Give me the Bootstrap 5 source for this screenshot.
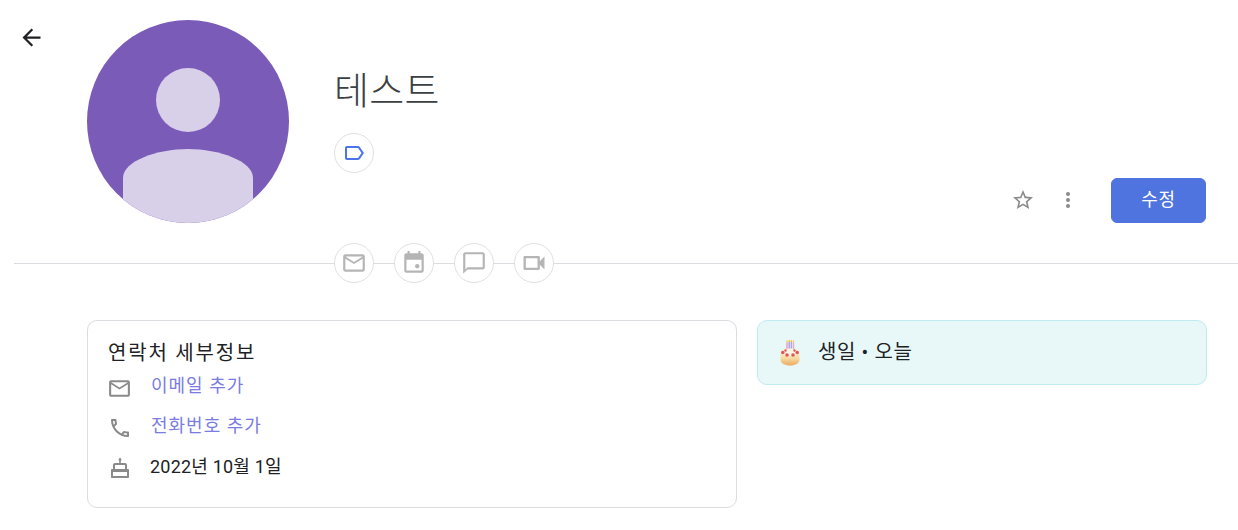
<!DOCTYPE html>
<html lang="ko">
<head>
    <meta charset="UTF-8">
    <meta name="viewport" content="width=device-width, initial-scale=1.0">
    <title>테스트</title>
    <link href="https://cdn.jsdelivr.net/npm/bootstrap@5.3.0/dist/css/bootstrap.min.css" rel="stylesheet">
    <style>
        body {
            background-color: #fff;
            color: #202124;
            font-family: Roboto, "Noto Sans CJK KR", sans-serif;
            overflow: hidden;
        }
        .profile-head {
            padding: 20px 32px 0 0;
            height: 223px;
        }
        .back-col {
            width: 87px;
            padding: 4px 0 0 18px;
        }
        .avatar-col {
            width: 202px;
            height: 203px;
            margin-right: 45px;
        }
        .contact-name {
            font-size: 38px;
            font-weight: 300;
            line-height: 44px;
            letter-spacing: .3px;
            color: #3c4043;
            margin: 49px 0 20px 0;
        }
        .chip-round {
            width: 40px;
            height: 40px;
            border: 1px solid #e0e0e0;
            border-radius: 50%;
            background-color: #fff;
            padding: 0;
        }
        .tool-group {
            gap: 21px;
        }
        .edit-btn {
            width: 95px;
            height: 45px;
            background-color: #4f74e0;
            border-color: #4f74e0;
            color: #fff;
            font-size: 18px;
            line-height: 1;
            letter-spacing: .8px;
            margin-left: 10px;
            padding: 0 0 2px;
        }
        .icon-tool {
            width: 24px;
            height: 24px;
            padding: 0;
            border: 0;
            background: none;
            margin-bottom: 3px;
        }
        .back-tool {
            width: 27px;
            height: 27px;
            padding: 0;
            border: 0;
            background: none;
            display: block;
        }
        .action-line {
            margin: 20px 0 0 14px;
            padding-left: 320px;
            gap: 20px;
            background: linear-gradient(#dadce0, #dadce0) center / 100% 1px no-repeat;
        }
        .detail-area {
            margin: 37px 0 0 87px;
            gap: 20px;
        }
        .detail-box {
            width: 650px;
            height: 188px;
            border: 1px solid #dadce0;
            border-radius: 10px;
            padding: 19px 20px 0;
        }
        .detail-title {
            font-size: 20px;
            line-height: 26px;
            font-weight: 400;
            letter-spacing: 1.8px;
            margin: 0 0 2px;
        }
        .detail-row {
            height: 40px;
            font-size: 18px;
            line-height: 24px;
        }
        .row-ico {
            flex: 0 0 43px;
            display: flex;
        }
        .mail-ico {
            margin-left: -1px;
        }
        .row-text {
            margin-bottom: 5px;
        }
        .add-link {
            color: #7a7ce2;
            text-decoration: none;
            letter-spacing: 1px;
        }
        .date-text {
            margin: 0 0 3px -1px;
            letter-spacing: .2px;
        }
        .birthday-box {
            width: 450px;
            height: 65px;
            background-color: #e8f8f9;
            border: 1px solid #bfeaf0;
            border-radius: 10px;
            padding-left: 20px;
            font-size: 20px;
            letter-spacing: .6px;
        }
        .birthday-box svg {
            margin-right: 16px;
        }
        .birthday-box span {
            margin-bottom: 2px;
        }
        .icon-gray { fill: #b5b5b5; }
        .icon-dim { fill: #8a8a8a; }
    </style>
</head>
<body>
    <div class="d-flex profile-head">
        <div class="back-col">
            <button class="back-tool" aria-label="back">
                <svg width="27" height="27" viewBox="0 0 24 24" fill="#202124"><path d="M20 11H7.830l5.590-5.590L12 4l-8 8 8 8 1.410-1.410L7.830 13H20v-2z"/></svg>
            </button>
        </div>
        <div class="avatar-col">
            <svg width="202" height="203" viewBox="0 0 202 203">
                <defs><clipPath id="avatarClip"><ellipse cx="101" cy="101.5" rx="101" ry="101.5"/></clipPath></defs>
                <ellipse cx="101" cy="101.5" rx="101" ry="101.5" fill="#7b5bb8"/>
                <circle cx="101" cy="80" r="32" fill="#d8cfe9"/>
                <path clip-path="url(#avatarClip)" d="M36 203V158C36 141 70 129 101 129C132 129 166 141 166 158V203Z" fill="#d8cfe9"/>
            </svg>
        </div>
        <div class="flex-grow-1">
            <h1 class="contact-name">테스트</h1>
            <button class="chip-round d-flex align-items-center justify-content-center" aria-label="label">
                <svg width="24" height="24" viewBox="0 0 24 24" fill="#4a74e8"><path d="M17.63 5.84C17.27 5.33 16.67 5 16 5L5 5.01C3.9 5.01 3 5.9 3 7v10c0 1.1.9 1.99 2 1.99L16 19c.67 0 1.27-.33 1.63-.84L22 12l-4.37-6.16zM16 17H5V7h11l3.55 5L16 17z"/></svg>
            </button>
        </div>
        <div class="d-flex align-items-center tool-group align-self-end">
            <button class="icon-tool" aria-label="star">
                <svg width="24" height="24" viewBox="0 0 24 24" class="icon-dim"><path d="M22 9.24l-7.19-.62L12 2 9.19 8.63 2 9.24l5.46 4.73L5.82 21 12 17.27 18.18 21l-1.63-7.03L22 9.24zM12 15.4l-3.76 2.27 1-4.28-3.32-2.88 4.38-.38L12 6.1l1.71 4.04 4.38.38-3.32 2.88 1 4.28L12 15.4z"/></svg>
            </button>
            <button class="icon-tool" aria-label="more">
                <svg width="24" height="24" viewBox="0 0 24 24" class="icon-dim"><circle cx="12" cy="6" r="2"/><circle cx="12" cy="12" r="2"/><circle cx="12" cy="18" r="2"/></svg>
            </button>
            <button class="btn edit-btn">수정</button>
        </div>
    </div>

    <div class="d-flex action-line">
        <button class="chip-round d-flex align-items-center justify-content-center" aria-label="mail">
            <svg width="26" height="26" viewBox="0 0 24 24" class="icon-gray"><path d="M20 4H4c-1.1 0-1.99.9-1.99 2L2 18c0 1.1.9 2 2 2h16c1.1 0 2-.9 2-2V6c0-1.1-.9-2-2-2zm0 14H4V8l8 5 8-5v10zm-8-7L4 6h16l-8 5z"/></svg>
        </button>
        <button class="chip-round d-flex align-items-center justify-content-center" aria-label="event">
            <svg width="26" height="26" viewBox="0 0 24 24" class="icon-gray"><path d="M19 3h-1V1h-2v2H8V1H6v2H5c-1.11 0-1.99.9-1.99 2L3 19c0 1.1.89 2 2 2h14c1.1 0 2-.9 2-2V5c0-1.1-.9-2-2-2zm0 16H5V9h14v10z"/><circle cx="15" cy="15" r="2"/></svg>
        </button>
        <button class="chip-round d-flex align-items-center justify-content-center" aria-label="chat">
            <svg width="26" height="26" viewBox="0 0 24 24" class="icon-gray"><path d="M20 2H4c-1.1 0-2 .9-2 2v18l4-4h14c1.1 0 2-.9 2-2V4c0-1.1-.9-2-2-2zm0 14H6l-2 2V4h16v12z"/></svg>
        </button>
        <button class="chip-round d-flex align-items-center justify-content-center" aria-label="video">
            <svg width="28" height="28" viewBox="0 0 24 24" class="icon-gray"><path d="M15 8v8H5V8h10m1-2H4c-.55 0-1 .45-1 1v10c0 .55.45 1 1 1h12c.55 0 1-.45 1-1v-3.5l4 4v-11l-4 4V7c0-.55-.45-1-1-1z"/></svg>
        </button>
    </div>

    <div class="d-flex align-items-start detail-area">
        <div class="detail-box">
            <h2 class="detail-title">연락처 세부정보</h2>
            <div class="d-flex align-items-center detail-row">
                <div class="row-ico"><svg class="mail-ico icon-dim" width="25" height="25" viewBox="0 0 24 24"><path d="M20 4H4c-1.1 0-1.99.9-1.99 2L2 18c0 1.1.9 2 2 2h16c1.1 0 2-.9 2-2V6c0-1.1-.9-2-2-2zm0 14H4V8l8 5 8-5v10zm-8-7L4 6h16l-8 5z"/></svg></div>
                <a class="add-link row-text" href="#">이메일 추가</a>
            </div>
            <div class="d-flex align-items-center detail-row">
                <div class="row-ico"><svg width="24" height="24" viewBox="0 0 24 24" class="icon-dim"><path d="M6.54 5c.06.89.21 1.76.45 2.59l-1.2 1.2c-.41-1.2-.67-2.47-.76-3.79h1.51m9.86 12.02c.85.24 1.72.39 2.6.45v1.49c-1.32-.09-2.59-.35-3.8-.75l1.2-1.19M7.5 3H4c-.55 0-1 .45-1 1 0 9.39 7.61 17 17 17 .55 0 1-.45 1-1v-3.49c0-.55-.45-1-1-1-1.24 0-2.45-.2-3.57-.57-.1-.04-.21-.05-.31-.05-.26 0-.51.1-.71.29l-2.2 2.2c-2.83-1.45-5.15-3.76-6.59-6.59l2.2-2.2c.28-.28.36-.67.25-1.02C8.7 6.45 8.5 5.25 8.5 4c0-.55-.45-1-1-1z"/></svg></div>
                <a class="add-link row-text" href="#">전화번호 추가</a>
            </div>
            <div class="d-flex align-items-center detail-row">
                <div class="row-ico"><svg width="24" height="24" viewBox="0 0 24 24" class="icon-dim"><path d="M12 1.500l1.500 2c0 .7-.4 1.100-.7 1.200V8h-1.600V4.700c-.3-.1-.7-.5-.7-1.200z"/><path fill-rule="evenodd" d="M7 7h10c1.100 0 2 .9 2 2v4h1c.6 0 1 .4 1 1v7c0 .6-.4 1-1 1H4c-.6 0-1-.4-1-1v-7c0-.6.4-1 1-1h1V9c0-1.100.9-2 2-2zm0 2v4h10V9H7zm-2 7v4h14v-4H5z"/></svg></div>
                <span class="row-text date-text">2022년 10월 1일</span>
            </div>
        </div>
        <div class="d-flex align-items-center birthday-box">
            <svg width="24" height="26" viewBox="0 0 24 26">
                <defs><linearGradient id="cakeBody" x1="0" y1="0" x2="0" y2="1"><stop offset="0" stop-color="#fdf0d2"/><stop offset=".55" stop-color="#f8dca8"/><stop offset="1" stop-color="#ecaa5c"/></linearGradient></defs>
                <path d="M9 2.500v8" stroke="#e8a3c0" stroke-width="1.500"/>
                <path d="M11.200 1.500v9" stroke="#b9a0e4" stroke-width="1.500"/>
                <path d="M13.400 1.500v9" stroke="#a9a6ea" stroke-width="1.500"/>
                <path d="M15.500 2.500v8" stroke="#e8b0c8" stroke-width="1.500"/>
                <path d="M9 .5v2M11.200 0v2M13.400 0v2M15.500 .5v2" stroke="#f5c33c" stroke-width="1.200"/>
                <path d="M2.500 15c0-4 4-6.500 9.500-6.500s9.500 2.500 9.500 6.500v5c0 3-4 5.500-9.500 5.500S2.500 23 2.500 20z" fill="url(#cakeBody)"/>
                <path d="M3.500 13c1-2.500 4.500-4 8.500-4s7.500 1.500 8.500 4c-1 2-4 3.300-8.500 3.300S4.500 15 3.500 13z" fill="#fdf3e6"/>
                <circle cx="4.800" cy="12.500" r="1.800" fill="#e0584f"/><circle cx="9" cy="15" r="1.800" fill="#e0584f"/><circle cx="15" cy="15" r="1.800" fill="#e0584f"/><circle cx="19.200" cy="12.500" r="1.800" fill="#e0584f"/><circle cx="7.500" cy="10.500" r="1.200" fill="#e0584f"/><circle cx="16.500" cy="10.500" r="1.200" fill="#e0584f"/>
            </svg>
            <span>생일 • 오늘</span>
        </div>
    </div>
    <script src="https://cdn.jsdelivr.net/npm/bootstrap@5.3.0/dist/js/bootstrap.bundle.min.js"></script>
</body>
</html>
